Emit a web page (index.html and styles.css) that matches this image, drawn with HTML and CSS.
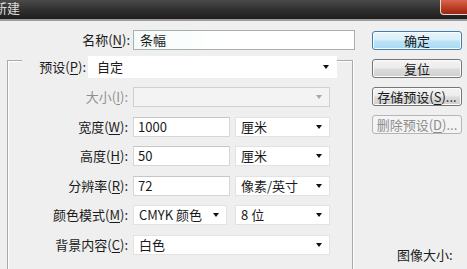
FILE: index.html
```html
<!DOCTYPE html>
<html lang="zh">
<head>
    <meta charset="UTF-8">
    <title>新建</title>
    <link rel="stylesheet" href="styles.css">
</head>
<body>
    <div class="titlebar">
        <span class="title">新建</span>
        <span class="close"></span>
    </div>
    <div class="dialog">
        <div class="form">
            <div class="row nameRow">
                <label class="lbl">名称(<u>N</u>):</label>
                <div class="field name">条幅</div>
            </div>
            <div class="group">
                <div class="row presetRow">
                    <label class="lblPreset">预设(<u>P</u>):</label>
                    <div class="select preset">自定<i class="arrow"></i></div>
                </div>
                <div class="row">
                    <label class="lbl off">大小(<u>I</u>):</label>
                    <div class="select wide off"><i class="arrow"></i></div>
                </div>
                <div class="row">
                    <label class="lbl">宽度(<u>W</u>):</label>
                    <div class="field num">1000</div>
                    <div class="select unit">厘米<i class="arrow"></i></div>
                </div>
                <div class="row">
                    <label class="lbl">高度(<u>H</u>):</label>
                    <div class="field num">50</div>
                    <div class="select unit">厘米<i class="arrow"></i></div>
                </div>
                <div class="row">
                    <label class="lbl">分辨率(<u>R</u>):</label>
                    <div class="field num">72</div>
                    <div class="select unit">像素/英寸<i class="arrow"></i></div>
                </div>
                <div class="row">
                    <label class="lbl">颜色模式(<u>M</u>):</label>
                    <div class="select mode">CMYK 颜色<i class="arrow"></i></div>
                    <div class="select unit bits">8 位<i class="arrow"></i></div>
                </div>
                <div class="row">
                    <label class="lbl">背景内容(<u>C</u>):</label>
                    <div class="select wide">白色<i class="arrow"></i></div>
                </div>
            </div>
        </div>
        <div class="side">
            <div class="btn default">确定</div>
            <div class="btn">复位</div>
            <div class="btn">存储预设(<u>S</u>)...</div>
            <div class="btn disabled">删除预设(<u>D</u>)...</div>
            <div class="imgSize">图像大小:</div>
        </div>
    </div>
</body>
</html>
```

FILE: styles.css
```css
body {
    margin: 0;
    width: 467px;
    height: 269px;
    overflow: hidden;
    background: #efefef;
    font-family: "Noto Sans CJK SC", "Noto Sans", sans-serif;
    font-size: 13px;
    color: #1b1b1b;
}
u {
    text-decoration: underline;
    text-underline-offset: 2px;
}

.titlebar {
    height: 19px;
    display: flex;
    background: linear-gradient(#4a4a4a, #2e2e2e 55%, #1e1e1e);
    border-bottom: 2px solid #9c9c9c;
    overflow: hidden;
}
.title {
    margin-left: -6px;
    color: #dcdcdc;
    font-size: 13px;
    line-height: 15px;
}
.close {
    margin-left: auto;
    width: 26px;
    height: 14px;
    background: linear-gradient(#d8654c, #b83a22 60%, #9c2514);
    border: 1px solid #e9d7d2;
    border-top: none;
    border-right: none;
    border-bottom-left-radius: 4px;
}

.dialog {
    display: flex;
    height: 248px;
}
.form {
    width: 356px;
    padding-top: 9px;
    display: flex;
    flex-direction: column;
}
.row {
    display: flex;
    height: 20px;
}
.lbl {
    width: 125px;
    padding-right: 5px;
    box-sizing: border-box;
    text-align: right;
    line-height: 20px;
}
.nameRow .lbl {
    width: 133px;
    padding-right: 3px;
}
.off {
    color: #8f8f8f;
}

.field {
    height: 20px;
    box-sizing: border-box;
    background: #fff;
    border: 1px solid #d6d6d6;
    border-top-color: #c6c6c6;
    padding-left: 4px;
    line-height: 18px;
}
.name {
    width: 222px;
    border-color: #a7b1ab;
    background: linear-gradient(90deg, #f4fbfb, #fff 40%);
    padding-left: 6px;
}
.num {
    width: 97px;
}

.group {
    margin-top: 10px;
    margin-left: 7px;
    width: 344px;
    flex: 1;
    border: 1px solid #a9a9a9;
    border-bottom: none;
    box-shadow: inset 1px 1px 0 #fff, 1px 0 0 #fff;
    display: flex;
    flex-direction: column;
    gap: 9.6px;
}
.presetRow {
    margin-top: -5px;
    height: 22px;
    margin-bottom: -0.6px;
}
.lblPreset {
    margin-left: 14px;
    width: 66px;
    padding-right: 2px;
    box-sizing: border-box;
    text-align: right;
    line-height: 22px;
    background: #efefef;
}

.select {
    position: relative;
    height: 20px;
    box-sizing: border-box;
    background: #fff;
    border: 1px solid #e2e2e2;
    padding-left: 5px;
    line-height: 18px;
}
.select.off {
    background: #f3f3f3;
    border-color: #d0d0d0;
}
.preset {
    width: 249px;
    height: 22px;
    line-height: 20px;
    border-color: #fff;
    padding-left: 8px;
}
.wide {
    width: 197px;
}
.unit {
    width: 95px;
    margin-left: 5px;
}
.mode {
    width: 94px;
}
.bits {
    margin-left: 8px;
}
.arrow {
    position: absolute;
    right: 7px;
    top: 50%;
    margin-top: -2px;
    border-left: 3.5px solid transparent;
    border-right: 3.5px solid transparent;
    border-top: 4px solid #111;
}
.off .arrow {
    border-top-color: #a8a8a8;
}

.side {
    margin-left: 16px;
    width: 90px;
    padding-top: 10px;
    display: flex;
    flex-direction: column;
    gap: 9px;
}
.btn {
    height: 19px;
    box-sizing: border-box;
    border: 1px solid #767676;
    border-radius: 3px;
    background: linear-gradient(#f4f4f4, #ececec 48%, #dcdcdc 52%, #cfcfcf);
    box-shadow: inset 0 0 0 1px #fbfbfb;
    text-align: center;
    line-height: 17px;
    white-space: nowrap;
}
.default {
    border-color: #3e7fab;
    background: linear-gradient(#e6f5fc, #d6effb 48%, #bde4f7 52%, #a9d9f2);
}
.disabled {
    border-color: #b2b6b8;
    background: #f4f4f4;
    box-shadow: none;
    color: #8e8e8e;
}
.imgSize {
    margin-top: auto;
    margin-bottom: 6px;
    padding-left: 25px;
    line-height: 16px;
}
```
